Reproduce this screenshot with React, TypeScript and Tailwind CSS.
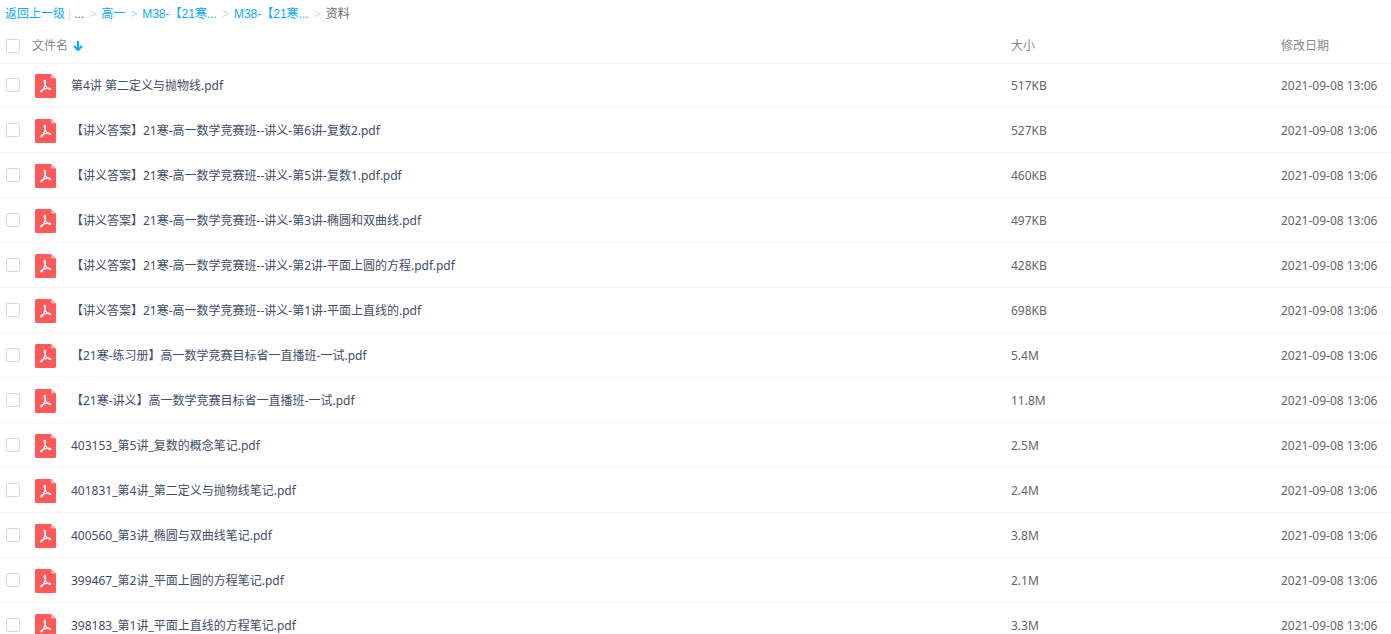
const files: [string, string][] = [
  ['第4讲 第二定义与抛物线.pdf', '517KB'],
  ['【讲义答案】21寒-高一数学竞赛班--讲义-第6讲-复数2.pdf', '527KB'],
  ['【讲义答案】21寒-高一数学竞赛班--讲义-第5讲-复数1.pdf.pdf', '460KB'],
  ['【讲义答案】21寒-高一数学竞赛班--讲义-第3讲-椭圆和双曲线.pdf', '497KB'],
  ['【讲义答案】21寒-高一数学竞赛班--讲义-第2讲-平面上圆的方程.pdf.pdf', '428KB'],
  ['【讲义答案】21寒-高一数学竞赛班--讲义-第1讲-平面上直线的.pdf', '698KB'],
  ['【21寒-练习册】高一数学竞赛目标省一直播班-一试.pdf', '5.4M'],
  ['【21寒-讲义】高一数学竞赛目标省一直播班-一试.pdf', '11.8M'],
  ['403153_第5讲_复数的概念笔记.pdf', '2.5M'],
  ['401831_第4讲_第二定义与抛物线笔记.pdf', '2.4M'],
  ['400560_第3讲_椭圆与双曲线笔记.pdf', '3.8M'],
  ['399467_第2讲_平面上圆的方程笔记.pdf', '2.1M'],
  ['398183_第1讲_平面上直线的方程笔记.pdf', '3.3M'],
];

const crumbs = ['高一', 'M38-【21寒...', 'M38-【21寒...'];

function PdfIcon() {
  return (
    <svg className="h-6 w-[21px] shrink-0" viewBox="0 0 21 24" aria-hidden="true">
      <path d="M1.500 0H16l5 4.500v18a1.500 1.500 0 0 1-1.500 1.500h-18A1.500 1.500 0 0 1 0 22.500v-21A1.500 1.500 0 0 1 1.500 0z" fill="#ff5959" />
      <path d="M16 0l5 4.500h-4a1 1 0 0 1-1-1z" fill="#ffacac" />
      <path
        d="M9.700 6.300c1.300 0 1 2.700.3 5-1 3-2.500 6.500-4.100 6.700-1.400-.2.400-2.400 4.100-3.400 2.600-.7 5.800-.8 5.800.4 0 1.100-2.600.2-4.200-1.600-1.600-1.800-3.200-7.100-1.900-7.100z"
        fill="none"
        stroke="#fff"
        strokeWidth="1.200"
      />
    </svg>
  );
}

function Tick({ label }: { label: string }) {
  return (
    <input
      type="checkbox"
      aria-label={label}
      className="block size-[14px] appearance-none rounded-xs border border-[#d4d9e3] bg-white checked:bg-[#09aaff]"
    />
  );
}

export default function App() {
  return (
    <div className="h-screen overflow-hidden bg-white font-['Noto_Sans','Noto_Sans_CJK_SC',sans-serif] text-xs text-[#424e67]">
      <nav
        aria-label="路径"
        className="flex h-7 items-center whitespace-nowrap pl-[5px] font-['Liberation_Sans','Noto_Sans_CJK_SC',sans-serif] text-[#09aaff]"
      >
        <a href="#back">返回上一级</a>
        <span className="px-[3px] text-[#c4dbfe]">|</span>
        <span className="text-[#666]">...</span>
        {crumbs.map((name, i) => (
          <span key={i} className="flex">
            <span className="px-[5px] text-[#c4dbfe]">&gt;</span>
            <a href="#folder">{name}</a>
          </span>
        ))}
        <span className="px-[5px] text-[#c4dbfe]">&gt;</span>
        <span className="text-[#666]">资料</span>
      </nav>
      <table className="w-full table-fixed border-collapse text-left">
        <colgroup>
          <col className="w-8" />
          <col />
          <col className="w-[270px]" />
          <col className="w-[110px]" />
        </colgroup>
        <thead className="text-[#888]">
          <tr className="h-[35px] border-b border-[#f2f6fd]">
            <th className="pt-0.5 pl-[6px]"><Tick label="全选" /></th>
            <th className="pt-0.5 font-normal">
              <button type="button" className="flex items-center gap-[5px]">
                文件名
                <svg className="size-[10px]" viewBox="0 0 10 10" fill="none" stroke="#09aaff" strokeWidth="2" aria-hidden="true">
                  <path d="M5 0v9M1 5l4 4 4-4" />
                </svg>
              </button>
            </th>
            <th className="pt-0.5 font-normal">大小</th>
            <th className="pt-0.5 font-normal">修改日期</th>
          </tr>
        </thead>
        <tbody>
          {files.map(([name, size]) => (
            <tr key={name} className="h-[45px] border-b border-[#f2f6fd] first:h-11">
              <td className="pl-[6px]"><Tick label={name} /></td>
              <td className="pt-0.5">
                <div className="flex items-center gap-[15px] whitespace-nowrap pl-[3px]">
                  <PdfIcon />
                  <a href="#file">{name}</a>
                </div>
              </td>
              <td className="pt-0.5 text-[#666]">{size}</td>
              <td className="whitespace-nowrap pt-0.5 text-[#666]">2021-09-08 13:06</td>
            </tr>
          ))}
        </tbody>
      </table>
    </div>
  );
}
